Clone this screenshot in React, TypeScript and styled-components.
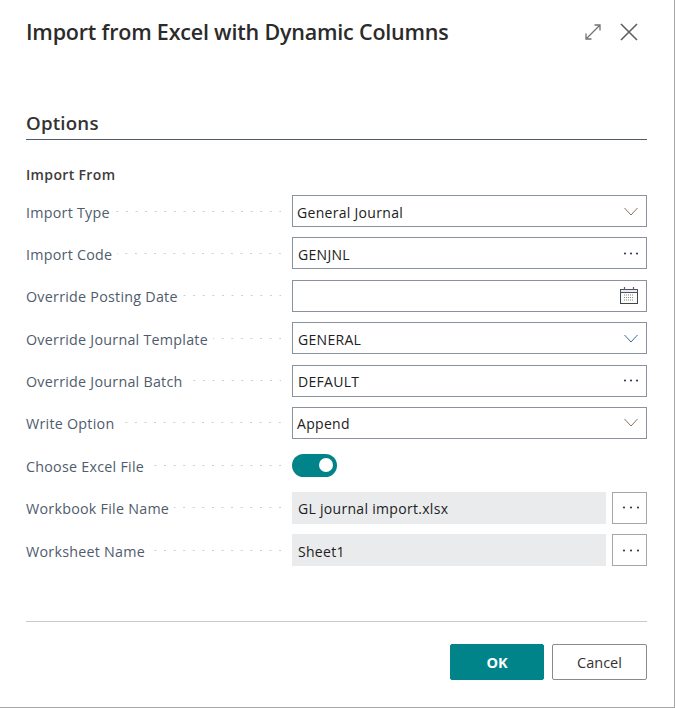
import { FC } from "react";
import styled, { createGlobalStyle } from "styled-components";

const GlobalStyle = createGlobalStyle`
    html, body {
        margin: 0;
        padding: 0;
        background: #ffffff;
    }
    * {
        box-sizing: border-box;
    }
`;

const Dialog = styled.div`
    width: 675px;
    height: 708px;
    padding: 0 27px 0 26px;
    display: flex;
    flex-direction: column;
    background: #ffffff;
    border-right: 1px solid #a6a6a6;
    border-bottom: 1px solid #a6a6a6;
    font-family: "Open Sans", "Noto Sans", sans-serif;
    color: #212121;
`;

const Header = styled.div`
    height: 64px;
    display: flex;
    flex-direction: row;
    align-items: center;
    justify-content: space-between;
`;

const Title = styled.h1`
    margin: 0 0 2px;
    font-size: 21.5px;
    font-weight: 550;
    letter-spacing: -0.2px;
    color: #2b2b2b;
`;

const HeaderIcons = styled.div`
    display: flex;
    flex-direction: row;
    align-items: center;
    gap: 18px;
    margin-right: 9px;
`;

const Section = styled.div`
    margin-top: 42px;
    height: 34px;
    display: flex;
    align-items: center;
    border-bottom: 1px solid #505c6d;
    font-size: 18.7px;
    font-weight: 550;
    letter-spacing: 0.2px;
    color: #333333;
`;

const GroupTitle = styled.div`
    margin-top: 24px;
    height: 22px;
    font-size: 14px;
    font-weight: 550;
    letter-spacing: 0.35px;
    line-height: 22px;
    color: #3c3c3c;
`;

const Rows = styled.div`
    margin-top: 9px;
    display: flex;
    flex-direction: column;
    gap: 10.4px;
`;

const Row = styled.div`
    height: 32px;
    display: grid;
    grid-template-columns: 255px 355px;
    column-gap: 11px;
    align-items: center;
`;

const LabelCell = styled.div`
    display: flex;
    flex-direction: row;
    align-items: center;
    gap: 5px;
    min-width: 0;
`;

const Label = styled.span`
    flex: none;
    padding-top: 2px;
    font-size: 14.3px;
    letter-spacing: 0.25px;
    color: #505c6d;
`;

const Dots = styled.span`
    flex: 1;
    height: 3px;
    background-image: radial-gradient(circle, #c9ccd1 1px, transparent 1.1px);
    background-size: 9.6px 3px;
    background-position: right -4px center;
`;

const Field = styled.div<{ $indent?: number }>`
    height: 32px;
    padding: 0 8px 0 ${props => props.$indent ?? 5}px;
    display: flex;
    flex-direction: row;
    align-items: center;
    justify-content: space-between;
    border: 1px solid #8a929e;
    background: #ffffff;
    font-size: 14px;
    letter-spacing: 0.3px;
    color: #212121;
`;

const FieldValue = styled.span`
    padding-top: 2px;
`;

const ReadOnlyWrap = styled.div`
    display: grid;
    grid-template-columns: 314px 35px;
    column-gap: 6px;
`;

const ReadOnlyField = styled.div`
    height: 32px;
    padding: 2px 6px 0;
    display: flex;
    align-items: center;
    background: #eaebed;
    font-size: 14px;
    letter-spacing: 0.3px;
    color: #212121;
`;

const MoreButton = styled.button`
    height: 32px;
    padding: 0;
    display: flex;
    justify-content: center;
    align-items: center;
    border: 1px solid #a6a6a6;
    background: #ffffff;
`;

const Toggle = styled.div<{ $on: boolean }>`
    width: 45px;
    height: 23px;
    padding: 0 4px;
    display: flex;
    align-items: center;
    justify-content: ${props => props.$on ? 'flex-end' : 'flex-start'};
    border-radius: 12px;
    background: #008489;
`;

const Knob = styled.span`
    width: 14px;
    height: 14px;
    border-radius: 50%;
    background: #ffffff;
`;

const Footer = styled.div`
    margin-top: auto;
    height: 86px;
    padding-top: 22px;
    display: flex;
    flex-direction: row;
    justify-content: flex-end;
    gap: 8px;
    border-top: 1px solid #c8c8c8;
`;

const Button = styled.button<{ $primary?: boolean }>`
    width: ${props => props.$primary ? 94 : 95}px;
    height: 36px;
    padding: 0;
    border-radius: 2px;
    cursor: pointer;
    font-family: inherit;
    font-size: 14.5px;
    font-weight: ${props => props.$primary ? 700 : 500};
    color: ${props => props.$primary ? '#ffffff' : '#333333'};
    background: ${props => props.$primary ? '#008489' : '#ffffff'};
    border: 1px solid ${props => props.$primary ? '#008489' : '#8a8a8a'};
`;

const Chevron: FC<{ color: string }> = ({ color }) => (
    <svg width="14" height="9" viewBox="0 0 14 9" fill="none">
        <path d="M0.5 1l6.5 7 6.5-7" stroke={color} strokeWidth="1" />
    </svg>
);

const Ellipsis: FC<{ step: number }> = ({ step }) => (
    <svg width={step * 2 + 4} height="3" viewBox={`0 0 ${step * 2 + 4} 3`}>
        <circle cx="3" cy="1.5" r="1.1" fill="#333f50" />
        <circle cx={3 + step} cy="1.5" r="1.1" fill="#333f50" />
        <circle cx={3 + step * 2} cy="1.5" r="1.1" fill="#333f50" />
    </svg>
);

const CalendarIcon = () => (
    <svg width="18" height="17" viewBox="0 0 18 17" fill="none">
        <rect x="0.5" y="2.5" width="17" height="14" fill="#fdfcf6" stroke="#3d4650" />
        <rect x="0.5" y="2.5" width="17" height="3" fill="#e9ecef" stroke="#4a525c" />
        <path d="M4.5 0v3M13.5 0v3" stroke="#7a4a78" strokeWidth="1.2" />
        <path d="M4 8h10M4 10.5h10M4 13h10" stroke="#7f8893" strokeDasharray="1 1" />
    </svg>
);

const ExpandIcon = () => (
    <svg width="18" height="18" viewBox="0 0 18 18" fill="none" stroke="#737373" strokeWidth="1.3">
        <path d="M2 16L16 2M10.5 2H16V7.5M2 10.5V16H7.5" />
    </svg>
);

const CloseIcon = () => (
    <svg width="18" height="18" viewBox="0 0 18 18" fill="none" stroke="#5f5f5f" strokeWidth="1.6">
        <path d="M1 1l16 16M17 1L1 17" />
    </svg>
);

interface IOptionRow {
    label: string;
    value?: string;
    indent?: number;
    icon?: React.ReactNode;
}

const OptionRow: FC<IOptionRow> = ({ label, value, indent, icon }) => (
    <Row>
        <LabelCell>
            <Label>{label}</Label>
            <Dots />
        </LabelCell>
        <Field $indent={indent}>
            <FieldValue>{value}</FieldValue>
            {icon}
        </Field>
    </Row>
);

const ReadOnlyRow: FC<{ label: string; value: string }> = ({ label, value }) => (
    <Row>
        <LabelCell>
            <Label>{label}</Label>
            <Dots />
        </LabelCell>
        <ReadOnlyWrap>
            <ReadOnlyField>{value}</ReadOnlyField>
            <MoreButton><Ellipsis step={7} /></MoreButton>
        </ReadOnlyWrap>
    </Row>
);

const App: FC = () => (
    <>
        <GlobalStyle />
        <Dialog>
            <Header>
                <Title>Import from Excel with Dynamic Columns</Title>
                <HeaderIcons>
                    <ExpandIcon />
                    <CloseIcon />
                </HeaderIcons>
            </Header>
            <Section>Options</Section>
            <GroupTitle>Import From</GroupTitle>
            <Rows>
                <OptionRow label="Import Type" value="General Journal" indent={4} icon={<Chevron color="#8a6f5f" />} />
                <OptionRow label="Import Code" value="GENJNL" icon={<Ellipsis step={6} />} />
                <OptionRow label="Override Posting Date" icon={<CalendarIcon />} />
                <OptionRow label="Override Journal Template" value="GENERAL" icon={<Chevron color="#3f6d99" />} />
                <OptionRow label="Override Journal Batch" value="DEFAULT" icon={<Ellipsis step={6} />} />
                <OptionRow label="Write Option" value="Append" indent={4} icon={<Chevron color="#8a6f5f" />} />
                <Row>
                    <LabelCell>
                        <Label>Choose Excel File</Label>
                        <Dots />
                    </LabelCell>
                    <Toggle $on={true}><Knob /></Toggle>
                </Row>
                <ReadOnlyRow label="Workbook File Name" value="GL journal import.xlsx" />
                <ReadOnlyRow label="Worksheet Name" value="Sheet1" />
            </Rows>
            <Footer>
                <Button $primary>OK</Button>
                <Button>Cancel</Button>
            </Footer>
        </Dialog>
    </>
);

export default App;
